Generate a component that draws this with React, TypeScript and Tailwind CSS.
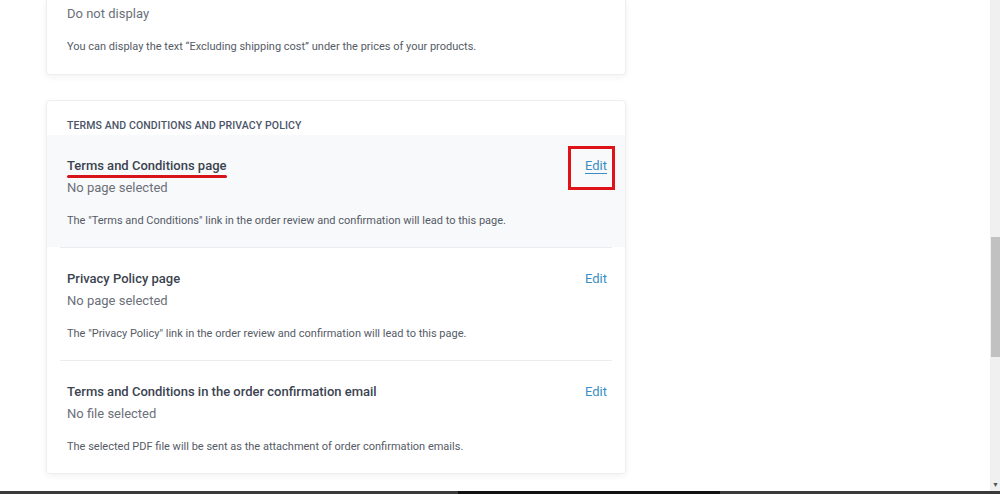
import React from "react";

type Row = {
  title: string;
  value: string;
  hint: string;
  active?: boolean;
};

const rows: Row[] = [
  {
    title: "Terms and Conditions page",
    value: "No page selected",
    hint: 'The "Terms and Conditions" link in the order review and confirmation will lead to this page.',
    active: true,
  },
  {
    title: "Privacy Policy page",
    value: "No page selected",
    hint: 'The "Privacy Policy" link in the order review and confirmation will lead to this page.',
  },
  {
    title: "Terms and Conditions in the order confirmation email",
    value: "No file selected",
    hint: "The selected PDF file will be sent as the attachment of order confirmation emails.",
  },
];

function SettingRow({ row }: { row: Row }) {
  return (
    <div className={row.active ? "bg-[#f8f9fb]" : ""}>
      <div className="flex items-start justify-between pl-5 pr-[18px] pt-[21px] pb-[18px] leading-5">
        <div>
          <div className="text-[13px] leading-5 font-medium text-[#3b4350]">
            <span className="relative">
              {row.title}
              {row.active && (
                <span className="absolute left-0 right-[-1px] top-[17px] h-[3px] rounded-full bg-[#d7141a]" />
              )}
            </span>
          </div>
          <div className="mt-[2px] text-[13px] leading-5 text-[#6b7079]">{row.value}</div>
          <p className="mt-[15px] text-[11px] leading-4 text-[#555b66]">{row.hint}</p>
        </div>
        <div className="relative h-5 text-[13px] leading-5">
          <a
            className={`text-[#3b8ec2] ${
              row.active ? "underline underline-offset-[3px] decoration-[#3b8ec2]" : ""
            }`}
          >
            Edit
          </a>
          {row.active && (
            <span className="absolute left-[-17px] top-[-10px] h-[44px] w-[47px] border-[3px] border-[#e0121a]" />
          )}
        </div>
      </div>
    </div>
  );
}

export default function App() {
  return (
    <div
      className="flex h-[494px] w-[1000px] flex-col overflow-hidden bg-white"
      style={{ fontFamily: "Roboto, 'Noto Sans', sans-serif" }}
    >
      <div className="flex min-h-0 flex-1">
        <div className="flex-1 pl-[46px]">
          <div className="w-[580px]">
            <div className="rounded-b border-x border-b border-[#eceef2] px-5 pt-1 pb-[19px] shadow-[0_2px_6px_rgba(30,40,70,0.06)]">
              <div className="text-[13px] leading-5 text-[#6b7079]">Do not display</div>
              <p className="mt-[15px] text-[11px] leading-4 text-[#555b66]">
                You can display the text “Excluding shipping cost” under the prices of your products.
              </p>
            </div>

            <div className="mt-[25px] rounded border border-[#eceef2] shadow-[0_2px_6px_rgba(30,40,70,0.06)]">
              <div className="px-5 pt-[19px] pb-[3px] text-[10.5px] leading-3 font-medium tracking-[0.01em] text-[#4b5467] uppercase">
                Terms and Conditions and Privacy Policy
              </div>
              <div>
                {rows.map((row, i) => (
                  <div key={row.title}>
                    {i > 0 && <div className="mx-[13px] h-px bg-[#eaecf0]" />}
                    <SettingRow row={row} />
                  </div>
                ))}
              </div>
            </div>
          </div>
        </div>

        <div className="flex w-[10px] flex-col bg-[#f0f0f0]">
          <div className="mt-[237px] ml-px h-[120px] bg-[#c1c1c1]" />
          <div className="mt-auto mb-[2px] ml-[2px] text-[7px] leading-none text-[#555]">▼</div>
        </div>
      </div>

      <div className="flex h-[3px] bg-[#3a3a3a]">
        <div className="ml-[458px] w-[262px] bg-[#111]" />
      </div>
    </div>
  );
}
